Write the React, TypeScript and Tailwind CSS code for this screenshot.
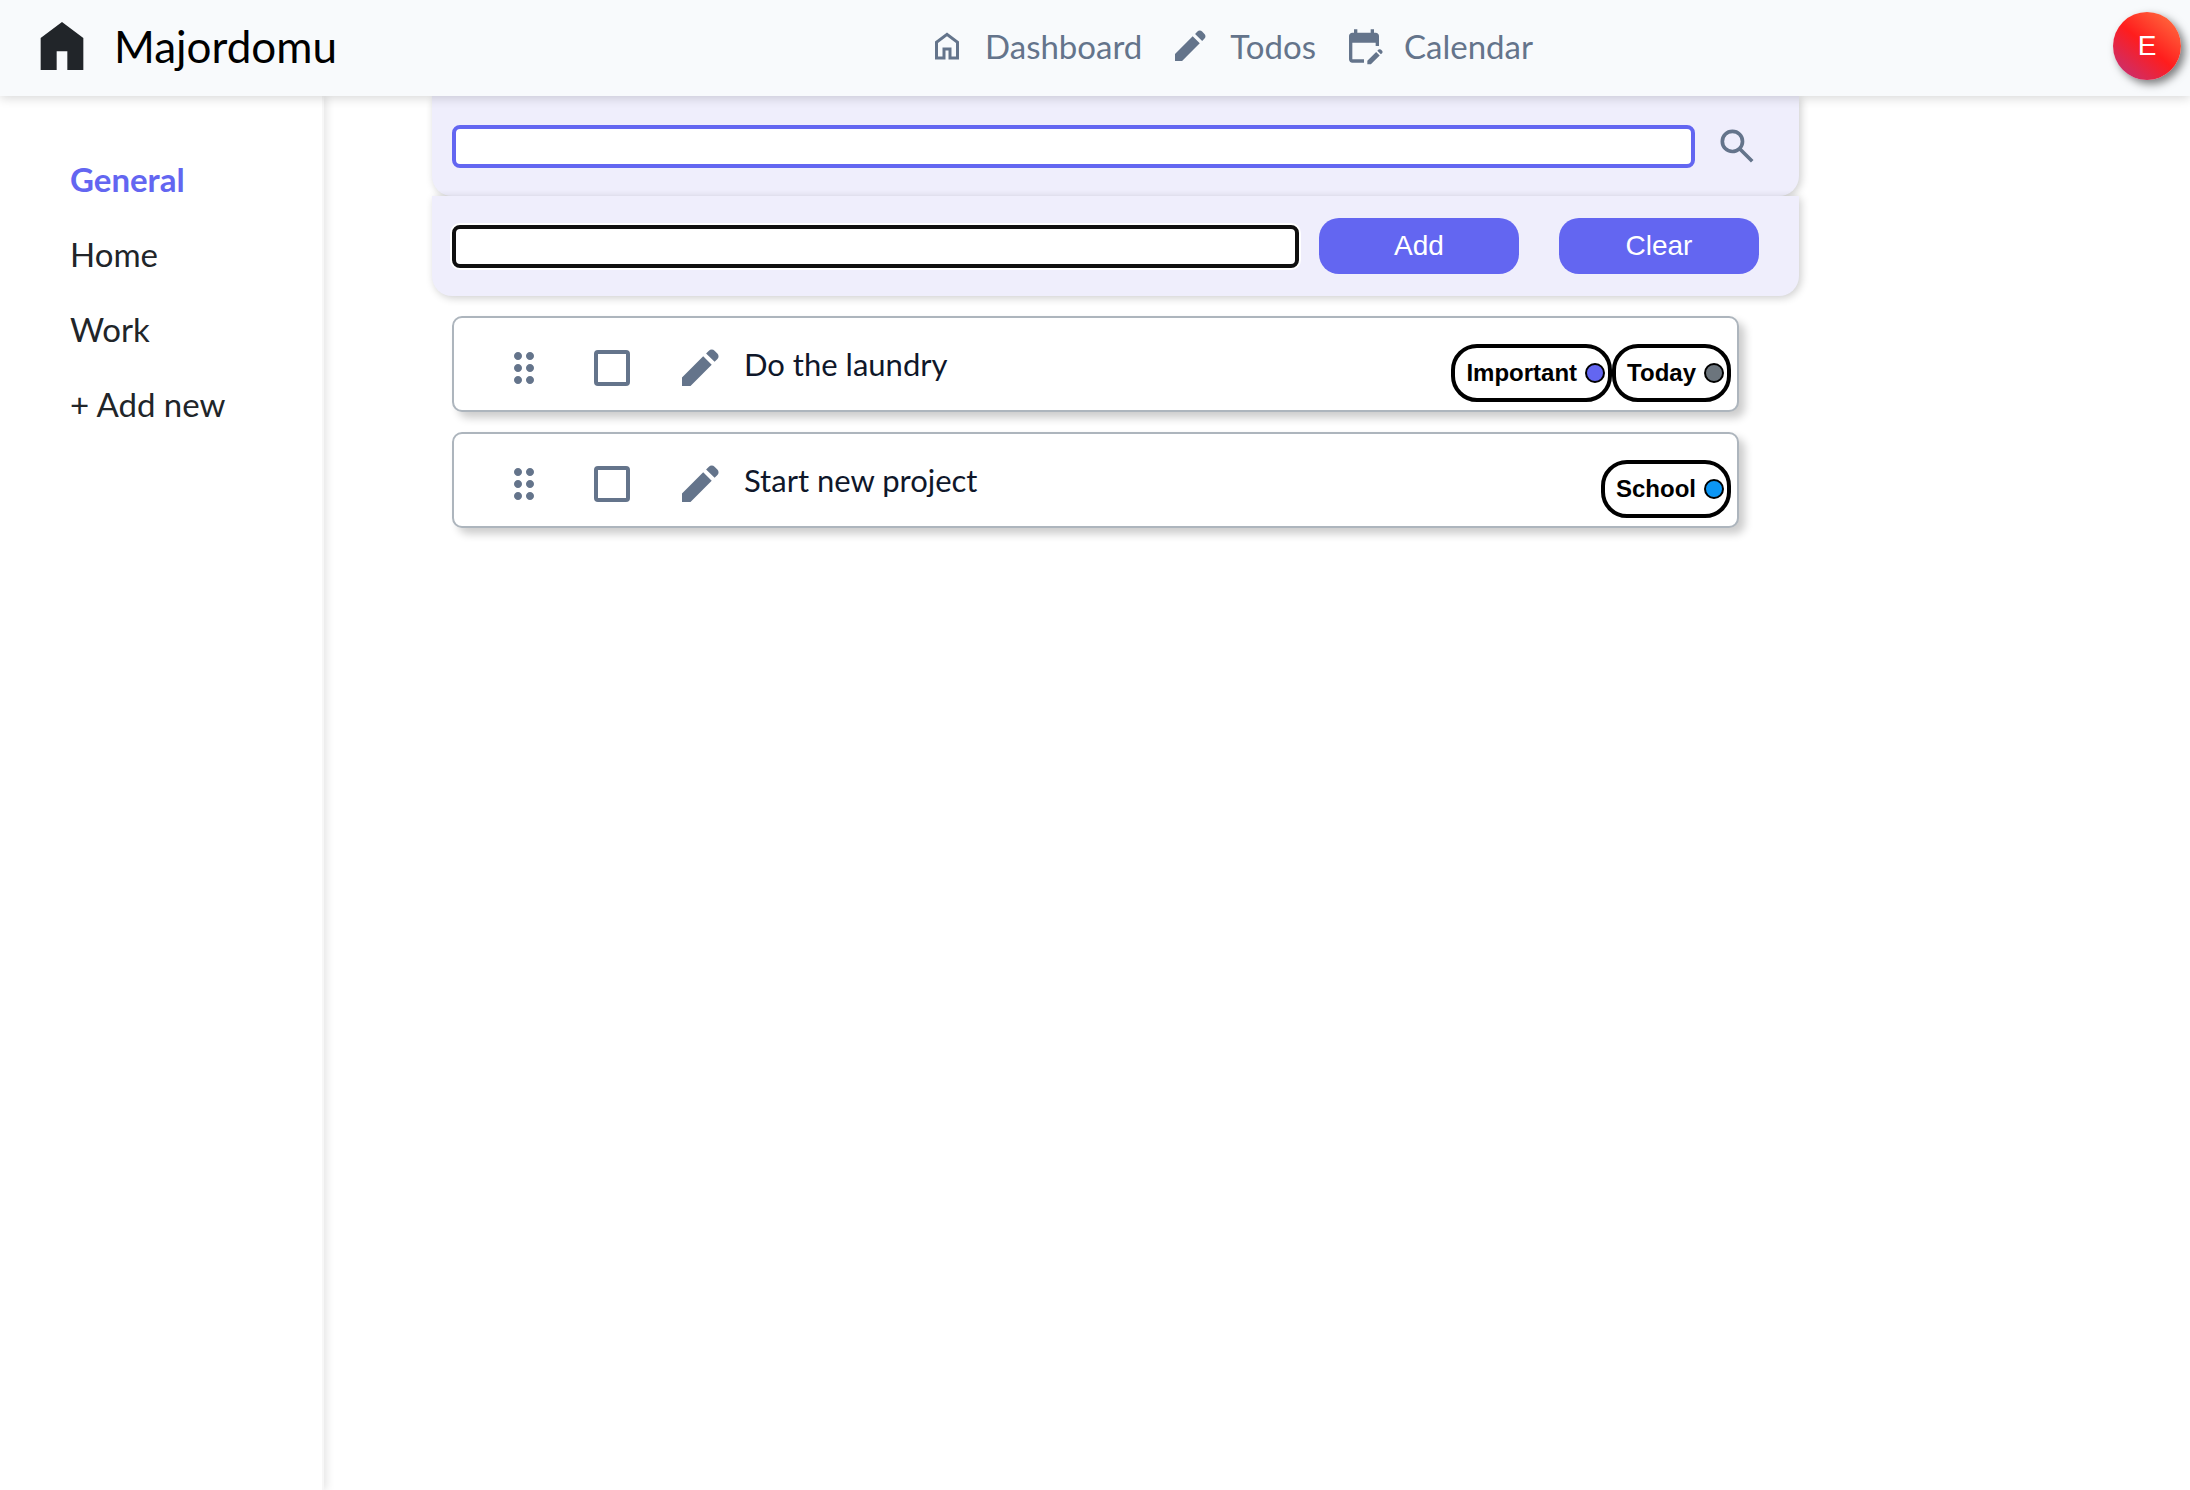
import React from "react";

type IconProps = { className?: string; d: string };

function Icon({ className, d }: IconProps) {
  return (
    <svg viewBox="0 0 24 24" fill="currentColor" aria-hidden="true" className={className}>
      <path d={d} />
    </svg>
  );
}

const paths = {
  logo: "M4 21V9l8-6 8 6v12h-6v-7h-4v7z",
  home: "M6 19h3v-6h6v6h3v-9l-6-4.5L6 10zm-2 2V9l8-6 8 6v12h-7v-6h-2v6z",
  pencil:
    "M19.3 8.925l-4.25-4.2 1.4-1.4q.575-.575 1.413-.575.837 0 1.412.575l1.4 1.4q.575.575.6 1.388.025.812-.55 1.387zM17.85 10.4L7.25 21H3v-4.25l10.6-10.6z",
  calendar:
    "M5 22q-.825 0-1.413-.587Q3 20.825 3 20V6q0-.825.587-1.412Q4.175 4 5 4h1V2h2v2h8V2h2v2h1q.825 0 1.413.588Q21 5.175 21 6v6h-2v-2H5v10h7v2zm17.125-5L20 14.875l.725-.725q.275-.275.7-.275.425 0 .7.275l.725.725q.275.275.275.7 0 .425-.275.7zM14 23v-2.125l5.3-5.3 2.125 2.125-5.3 5.3z",
  search:
    "M19.6 21l-6.3-6.3q-.75.6-1.725.95Q10.6 16 9.5 16q-2.725 0-4.612-1.888Q3 12.225 3 9.5q0-2.725 1.888-4.613Q6.775 3 9.5 3q2.725 0 4.613 1.887Q16 6.775 16 9.5q0 1.1-.35 2.075-.35.975-.95 1.725l6.3 6.3zM9.5 14q1.875 0 3.188-1.312Q14 11.375 14 9.5q0-1.875-1.312-3.188Q11.375 5 9.5 5 7.625 5 6.313 6.312 5 7.625 5 9.5q0 1.875 1.313 3.188Q7.625 14 9.5 14z",
  drag: "M9 20q-.825 0-1.412-.587Q7 18.825 7 18q0-.825.588-1.413Q8.175 16 9 16q.825 0 1.413.587Q11 17.175 11 18q0 .825-.587 1.413Q9.825 20 9 20zm6 0q-.825 0-1.412-.587Q13 18.825 13 18q0-.825.588-1.413Q14.175 16 15 16q.825 0 1.413.587Q17 17.175 17 18q0 .825-.587 1.413Q15.825 20 15 20zm-6-6q-.825 0-1.412-.588Q7 12.825 7 12t.588-1.413Q8.175 10 9 10q.825 0 1.413.587Q11 11.175 11 12q0 .825-.587 1.412Q9.825 14 9 14zm6 0q-.825 0-1.412-.588Q13 12.825 13 12t.588-1.413Q14.175 10 15 10q.825 0 1.413.587Q17 11.175 17 12q0 .825-.587 1.412Q15.825 14 15 14zM9 8q-.825 0-1.412-.588Q7 6.825 7 6t.588-1.412Q8.175 4 9 4q.825 0 1.413.588Q11 5.175 11 6t-.587 1.412Q9.825 8 9 8zm6 0q-.825 0-1.412-.588Q13 6.825 13 6t.588-1.412Q14.175 4 15 4q.825 0 1.413.588Q17 5.175 17 6t-.587 1.412Q15.825 8 15 8z",
};

type Tag = { label: string; dot: string };
type Todo = { text: string; tags: Tag[] };

const todos: Todo[] = [
  {
    text: "Do the laundry",
    tags: [
      { label: "Important", dot: "bg-[#6366f1]" },
      { label: "Today", dot: "bg-[#6c757d]" },
    ],
  },
  { text: "Start new project", tags: [{ label: "School", dot: "bg-[#0b96f5]" }] },
];

function Header() {
  return (
    <header className="relative z-10 flex h-24 items-center justify-between bg-slate-50 pr-[9px] pb-1 pl-[30px] shadow-[0_2px_10px_rgba(0,0,0,0.16)]">
      <a href="#home" className="flex items-center gap-5 text-[44px] leading-none text-black">
        <Icon d={paths.logo} className="size-16 text-[#212529]" />
        Majordomu
      </a>
      <nav className="ml-3 flex items-center gap-7 text-[33px] leading-none text-[#64748b]">
        <a href="#dashboard" className="flex items-center gap-5">
          <Icon d={paths.home} className="size-9" />
          Dashboard
        </a>
        <a href="#todos" className="flex items-center gap-5">
          <Icon d={paths.pencil} className="size-10" />
          Todos
        </a>
        <a href="#calendar" className="flex items-center gap-5">
          <Icon d={paths.calendar} className="size-10" />
          Calendar
        </a>
      </nav>
      <button
        type="button"
        aria-label="Account"
        className="size-[68px] rounded-full bg-[linear-gradient(40deg,#bd3381_0%,#ff1d1d_50%,#ff7a45_100%)] font-['Liberation_Sans',sans-serif] text-[28px] leading-none text-white shadow-[4px_4px_8px_rgba(0,0,0,0.5)]"
      >
        E
      </button>
    </header>
  );
}

function Sidebar() {
  return (
    <aside className="w-[324px] shrink-0 border-r-2 border-[#f7f7f7] pt-[46px] pl-[70px] text-[33px] text-[#212529] shadow-[3px_0_8px_rgba(0,0,0,0.1)]">
      <ul>
        {["General", "Home", "Work"].map((name) => (
          <li key={name} className="flex h-[75px] items-center">
            <a href={`#${name.toLowerCase()}`} className={name === "General" ? "font-bold text-[#6366f1]" : ""}>
              {name}
            </a>
          </li>
        ))}
        <li className="flex h-[75px] items-center">
          <button type="button">+ Add new</button>
        </li>
      </ul>
    </aside>
  );
}

function TodoCard({ todo }: { todo: Todo }) {
  return (
    <li className="flex h-24 items-center justify-between rounded-[10px] border-2 border-[#adb5bd] bg-white pr-[6px] pl-[46px] shadow-[6px_6px_8px_rgba(0,0,0,0.2)]">
      <div className="flex items-center text-[#64748b]">
        <button type="button" aria-label="Reorder" className="mt-2">
          <Icon d={paths.drag} className="size-12" />
        </button>
        <input
          type="checkbox"
          aria-label={todo.text}
          className="mt-2 ml-[46px] size-9 appearance-none rounded-[4px] border-4 border-[#64748b] bg-white"
        />
        <button type="button" aria-label={`Edit ${todo.text}`} className="mt-2 ml-[46px]">
          <Icon d={paths.pencil} className="size-12" />
        </button>
        <span className="ml-5 text-[31px] leading-none text-[#0f172a]">{todo.text}</span>
      </div>
      <div className="mt-[18px] flex font-['Liberation_Sans',sans-serif] text-2xl font-bold text-black">
        {todo.tags.map((tag) => (
          <span
            key={tag.label}
            className="flex h-[58px] items-center gap-2 rounded-[26px] border-4 border-black bg-white pr-[3px] pl-[11px]"
          >
            {tag.label}
            <span className={`size-5 rounded-full border-2 border-black ${tag.dot}`} />
          </span>
        ))}
      </div>
    </li>
  );
}

export default function App() {
  const panel =
    "flex h-[100px] items-center rounded-b-[20px] bg-[#efeefc] pl-5 shadow-[2px_2px_8px_rgba(0,0,0,0.2)]";
  const action =
    "h-14 w-[200px] rounded-[20px] bg-[#6366f1] font-['Liberation_Sans',sans-serif] text-[28px] leading-none text-white";
  return (
    <div className="flex min-h-screen flex-col bg-white font-[Lato,sans-serif]">
      <Header />
      <div className="flex flex-1">
        <Sidebar />
        <main className="grid flex-1 grid-cols-[1367fr_391fr] content-start pl-[108px]">
          <div>
            <form role="search" className={`${panel} pr-10`}>
              <input
                type="text"
                aria-label="Search todos"
                className="h-[43px] min-w-0 flex-1 rounded-lg border-4 border-[#6366f1] bg-white px-2 text-2xl outline-none"
              />
              <button type="submit" aria-label="Search" className="ml-5 text-[#64748b]">
                <Icon d={paths.search} className="size-11" />
              </button>
            </form>
            <form className={`${panel} pr-10`}>
              <input
                type="text"
                aria-label="New todo"
                className="mr-5 h-[43px] min-w-0 flex-1 rounded-lg border-4 border-[#101010] bg-white px-2 text-2xl ring-2 ring-white outline-none"
              />
              <button type="submit" className={`${action} mr-10`}>
                Add
              </button>
              <button type="reset" className={action}>
                Clear
              </button>
            </form>
            <ul className="mt-5 mr-[60px] ml-5 flex flex-col gap-5">
              {todos.map((todo) => (
                <TodoCard key={todo.text} todo={todo} />
              ))}
            </ul>
          </div>
        </main>
      </div>
    </div>
  );
}
